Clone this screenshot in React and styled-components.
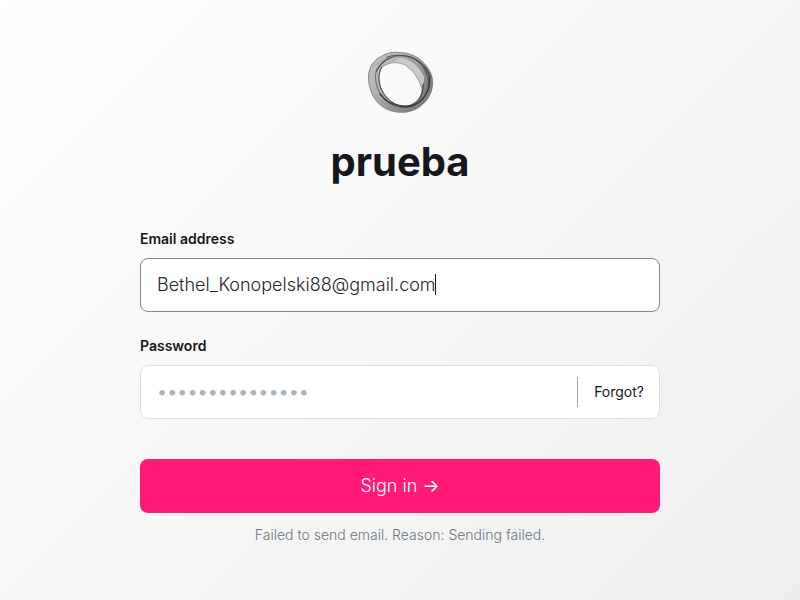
import React from "react";
import styled, { createGlobalStyle } from "styled-components";

const GlobalStyle = createGlobalStyle`
  * { box-sizing: border-box; }
  body {
    margin: 0;
    font-family: Inter, "Liberation Sans", sans-serif;
    color: #15171a;
  }
`;

const Page = styled.main`
  min-height: 100vh;
  padding: 45px 24px;
  display: flex;
  flex-direction: column;
  align-items: center;
  background: linear-gradient(135deg, #ffffff 0%, #eeeeee 100%);
`;

const Form = styled.form`
  width: 100%;
  max-width: 520px;
  display: flex;
  flex-direction: column;
`;

const Header = styled.header`
  display: flex;
  flex-direction: column;
  align-items: center;
  margin-bottom: 41px;
`;

const Logo = styled.svg`
  width: 80px;
  height: 76px;
`;

const Title = styled.h1`
  margin: 15px 0 0;
  font-size: 40px;
  line-height: 52px;
  font-weight: 700;
`;

const Field = styled.div`
  display: flex;
  flex-direction: column;
  margin-bottom: ${(p) => (p.$last ? 40 : 24)}px;
`;

const Label = styled.label`
  margin-bottom: 9px;
  font-size: 14px;
  line-height: 20px;
  font-weight: 600;
`;

const InputBox = styled.div`
  position: relative;
  display: flex;
  align-items: center;
  height: 54px;
  background: #ffffff;
  border: 1px solid ${(p) => (p.$active ? "#7c8b9a" : "#dddedf")};
  border-radius: 8px;
`;

const Input = styled.input`
  flex: 1;
  min-width: 0;
  height: 100%;
  padding: 0 16px 2px;
  border: 0;
  outline: 0;
  border-radius: 8px;
  background: transparent;
  font: 300 18px/24px Inter, sans-serif;
  color: #23272c;
  caret-color: transparent;
  &::placeholder {
    color: #abb4be;
    font-weight: 400;
    opacity: 1;
  }
`;

const Caret = styled.span`
  position: absolute;
  left: 294px;
  top: 15px;
  width: 1px;
  height: 21px;
  background: #15171a;
`;

const ForgotButton = styled.button`
  height: 30px;
  padding: 0 15px 0 16px;
  border: 0;
  border-left: 1px solid #a5a8ab;
  background: transparent;
  font: 400 14px/20px Inter, sans-serif;
  color: #15171a;
`;

const SubmitButton = styled.button`
  height: 54px;
  padding: 0 16px;
  border: 0;
  border-radius: 8px;
  background: #ff1a75;
  color: #ffffff;
  font: 300 18px/24px Inter, sans-serif;
`;

const Arrow = styled.span`
  font-weight: 400;
`;

const Message = styled.p`
  margin: 12px 0 0;
  text-align: center;
  font-size: 14px;
  line-height: 20px;
  font-weight: 300;
  color: #6b7784;
`;

function RingLogo() {
  return (
    <Logo viewBox="0 0 240 228" role="img" aria-label="prueba logo">
      <defs>
        <linearGradient id="band" x1="0" y1="0" x2="1" y2="0.7">
          <stop offset="0" stopColor="#cacaca" />
          <stop offset="0.5" stopColor="#a8a8a8" />
          <stop offset="1" stopColor="#747474" />
        </linearGradient>
      </defs>
      <path
        fill="url(#band)"
        fillRule="evenodd"
        d="M26 90C27 66 42 45 64 34C82 23 101 20 121 23C148 24 173 34 188 51C207 69 219 91 218 115C217 139 207 161 190 176C170 195 147 203 122 202C96 201 77 193 60 179C36 159 23 120 26 90ZM66 68C54 91 59 124 73 145C89 172 116 185 145 181C169 174 188 153 184 126C178 108 169 92 158 79C151 70 148 73 140 62C120 51 91 48 66 68Z"
      />
      <path fill="#c9c9c9" d="M116 40C143 36 177 62 190 91C195 105 190 117 184 126C178 108 169 92 158 79C151 70 148 73 140 62C129 55 113 51 102 52Z" />
      <g fill="none" strokeLinecap="round">
        <path stroke="#858585" strokeWidth="3" d="M26 90C27 66 42 45 64 34C82 23 101 20 121 23C148 24 173 34 188 51C207 69 219 91 218 115C217 139 207 161 190 176C170 195 147 203 122 202C96 201 77 193 60 179C36 159 23 120 26 90" />
        <path stroke="#444444" strokeWidth="4" d="M49 79C63 50 93 29 128 32C168 34 200 65 211 97" />
        <path stroke="#505050" strokeWidth="3" d="M80 37C112 24 154 32 181 52C198 70 211 101 205 127" />
        <path stroke="#666666" strokeWidth="3" d="M51 72C42 95 47 125 62 148C79 174 108 190 141 188C169 185 193 165 201 134C209 111 203 87 187 66" />
        <path stroke="#484848" strokeWidth="3" d="M65 66C52 88 54 120 71 146C90 175 119 189 151 181C173 174 190 153 190 117" />
        <path stroke="#3c3c3c" strokeWidth="4" d="M60 147C78 170 94 179 121 183C150 190 179 176 194 154C206 136 211 118 208 97" />
        <path stroke="#909090" strokeWidth="2" d="M67 66C89 47 122 52 141 63C145 73 153 71 158 80C170 92 178 108 183 126M37 65C69 48 78 34 117 34C150 34 184 62 192 91M52 158C75 184 119 198 151 192C179 183 204 158 213 135" />
      </g>
    </Logo>
  );
}

export default function App() {
  return (
    <>
      <GlobalStyle />
      <Page>
        <Form onSubmit={(e) => e.preventDefault()}>
          <Header>
            <RingLogo />
            <Title>prueba</Title>
          </Header>
          <Field>
            <Label htmlFor="email">Email address</Label>
            <InputBox $active>
              <Input id="email" type="email" defaultValue="Bethel_Konopelski88@gmail.com" autoFocus />
              <Caret aria-hidden="true" />
            </InputBox>
          </Field>
          <Field $last>
            <Label htmlFor="password">Password</Label>
            <InputBox>
              <Input id="password" type="password" placeholder="•••••••••••••••" />
              <ForgotButton type="button">Forgot?</ForgotButton>
            </InputBox>
          </Field>
          <SubmitButton type="submit">Sign in <Arrow>→</Arrow></SubmitButton>
          <Message role="alert">Failed to send email. Reason: Sending failed.</Message>
        </Form>
      </Page>
    </>
  );
}
